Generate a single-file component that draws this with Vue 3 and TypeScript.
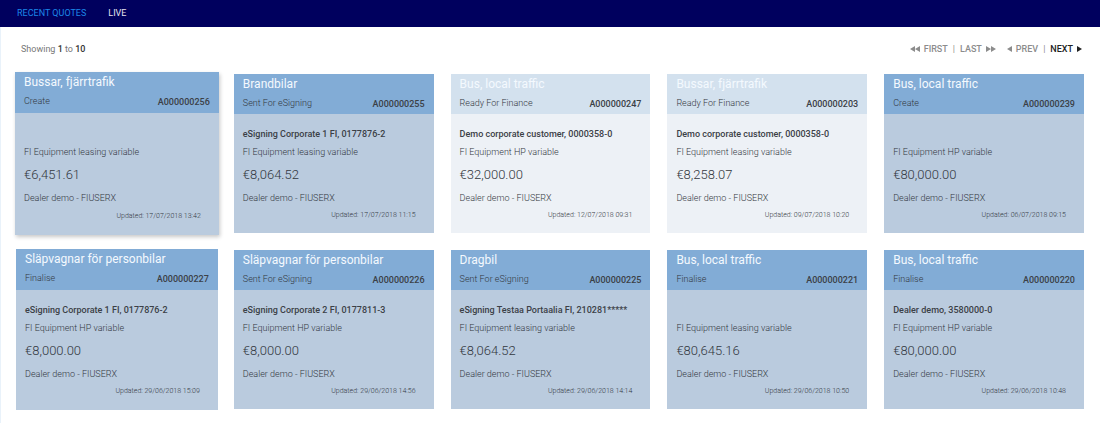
<script setup lang="ts">
interface Quote {
  vehicle: string
  status: string
  id: string
  customer?: string
  product: string
  amount: string
  updated: string
}

const leasing = 'FI Equipment leasing variable'
const hirePurchase = 'FI Equipment HP variable'

const quotes: Quote[] = [
  { vehicle: 'Bussar, fjärrtrafik', status: 'Create', id: 'A000000256', product: leasing, amount: '€6,451.61', updated: '17/07/2018 13:42' },
  { vehicle: 'Brandbilar', status: 'Sent For eSigning', id: 'A000000255', customer: 'eSigning Corporate 1 FI, 0177876-2', product: leasing, amount: '€8,064.52', updated: '17/07/2018 11:15' },
  { vehicle: 'Bus, local traffic', status: 'Ready For Finance', id: 'A000000247', customer: 'Demo corporate customer, 0000358-0', product: hirePurchase, amount: '€32,000.00', updated: '12/07/2018 09:31' },
  { vehicle: 'Bussar, fjärrtrafik', status: 'Ready For Finance', id: 'A000000203', customer: 'Demo corporate customer, 0000358-0', product: leasing, amount: '€8,258.07', updated: '09/07/2018 10:20' },
  { vehicle: 'Bus, local traffic', status: 'Create', id: 'A000000239', product: hirePurchase, amount: '€80,000.00', updated: '06/07/2018 09:15' },
  { vehicle: 'Släpvagnar för personbilar', status: 'Finalise', id: 'A000000227', customer: 'eSigning Corporate 1 FI, 0177876-2', product: hirePurchase, amount: '€8,000.00', updated: '29/06/2018 15:09' },
  { vehicle: 'Släpvagnar för personbilar', status: 'Sent For eSigning', id: 'A000000226', customer: 'eSigning Corporate 2 FI, 0177811-3', product: hirePurchase, amount: '€8,000.00', updated: '29/06/2018 14:56' },
  { vehicle: 'Dragbil', status: 'Sent For eSigning', id: 'A000000225', customer: 'eSigning Testaa Portaalia FI, 210281*****', product: leasing, amount: '€8,064.52', updated: '29/06/2018 14:14' },
  { vehicle: 'Bus, local traffic', status: 'Finalise', id: 'A000000221', product: leasing, amount: '€80,645.16', updated: '29/06/2018 10:50' },
  { vehicle: 'Bus, local traffic', status: 'Finalise', id: 'A000000220', customer: 'Dealer demo, 3580000-0', product: hirePurchase, amount: '€80,000.00', updated: '29/06/2018 10:48' },
]

const isMuted = (q: Quote) => q.status === 'Ready For Finance'
</script>

<template>
  <div class="page">
    <nav class="tabs">
      <a class="tab active" href="#recent">RECENT QUOTES</a>
      <a class="tab" href="#live">LIVE</a>
    </nav>

    <div class="toolbar">
      <p class="showing">Showing <b>1</b> to <b>10</b></p>
      <div class="pager">
        <button type="button" disabled>
          <svg width="10" height="8" viewBox="0 0 10 8"><path d="M5 1v6L0 4zM10 1v6L5 4z" /></svg>
          FIRST
        </button>
        <span class="bar">|</span>
        <button type="button" disabled>
          LAST
          <svg width="10" height="8" viewBox="0 0 10 8"><path d="M0 1v6l5-3zM5 1v6l5-3z" /></svg>
        </button>
        <button class="prev" type="button" disabled>
          <svg width="5" height="8" viewBox="0 0 5 8"><path d="M5 1v6L0 4z" /></svg>
          PREV
        </button>
        <span class="bar">|</span>
        <button type="button">
          NEXT
          <svg width="5" height="8" viewBox="0 0 5 8"><path d="M0 1v6l5-3z" /></svg>
        </button>
      </div>
    </div>

    <main class="grid">
      <article
        v-for="(q, i) in quotes"
        :key="q.id"
        class="card"
        :class="{ muted: isMuted(q), raised: i === 0, focused: i === 5 }"
      >
        <header class="head">
          <h2>{{ q.vehicle }}</h2>
          <div class="meta">
            <span>{{ q.status }}</span>
            <span class="id">{{ q.id }}</span>
          </div>
        </header>
        <div class="body">
          <p class="customer">{{ q.customer }}</p>
          <p class="line">{{ q.product }}</p>
          <p class="amount">{{ q.amount }}</p>
          <p class="line">Dealer demo - FIUSERX</p>
          <p class="updated">Updated: {{ q.updated }}</p>
        </div>
      </article>
    </main>
  </div>
</template>

<style>
body {
  background: #fff;
}
</style>

<style scoped>
.page {
  font-family: Roboto, "Liberation Sans", sans-serif;
  font-size: 9px;
  color: #33383e;
  box-shadow: inset 1px 0 #e9f2fa;
}

p,
h2 {
  margin: 0;
}

.tabs {
  display: flex;
  align-items: center;
  gap: 22px;
  height: 27px;
  padding: 0 17px;
  background: #00005e;
}

.tab {
  padding-bottom: 2px;
  color: #e4e4ee;
  font-size: 9px;
  line-height: 12px;
  text-decoration: none;
}

.tab.active {
  color: #1c86e8;
}

.toolbar {
  display: flex;
  justify-content: space-between;
  align-items: center;
  height: 43px;
  padding: 0 18px 0 21px;
}

.showing {
  color: #777;
}

.showing b {
  color: #333;
  font-weight: 500;
}

.pager {
  display: flex;
  align-items: center;
  gap: 5px;
}

.pager button {
  display: flex;
  align-items: center;
  gap: 4px;
  padding: 0;
  border: 0;
  background: none;
  color: #222;
  font: 500 9px/12px Roboto, "Liberation Sans", sans-serif;
}

.pager button:disabled {
  color: #8c8c8c;
}

.pager .prev {
  margin-left: 6px;
}

.pager svg {
  fill: currentColor;
}

.bar {
  color: #8c8c8c;
}

.grid {
  display: grid;
  grid-template-columns: repeat(5, minmax(0, 1fr));
  gap: 17px;
  padding: 4px 16px 14px 17px;
}

.card {
  display: flex;
  flex-direction: column;
  background: #bacbde;
}

.head {
  min-height: 40px;
  padding: 0 9px;
  box-sizing: border-box;
  background: #82acd6;
}

.head h2 {
  color: #f4f9fe;
  font-size: 12px;
  font-weight: 400;
  line-height: 20px;
}

.meta {
  display: flex;
  justify-content: space-between;
  line-height: 18px;
  font-weight: 300;
}

.id {
  padding-top: 1px;
  color: #3b4046;
  font-weight: 500;
}

.body {
  flex: 1;
  padding: 11px 9px 10px;
}

.customer {
  height: 18px;
  color: #3b4046;
  line-height: 18px;
  font-weight: 500;
  white-space: nowrap;
}

.line {
  font-weight: 300;
  line-height: 18px;
}

.amount {
  font-size: 13px;
  font-weight: 300;
  line-height: 28px;
}

.updated {
  padding-right: 9px;
  font-size: 7px;
  font-weight: 300;
  line-height: 16px;
  text-align: right;
}

.muted {
  background: #edf1f6;
}

.muted .head {
  background: #d3e1ee;
}

.raised {
  margin: -2px;
  box-shadow: 1px 2px 4px rgba(0, 0, 0, 0.22);
}

.raised .head {
  min-height: 41px;
}

.raised .body {
  padding-top: 12px;
}

.raised .updated {
  line-height: 18px;
}

.focused {
  margin: -1px;
}

.focused .head {
  min-height: 41px;
}
</style>
